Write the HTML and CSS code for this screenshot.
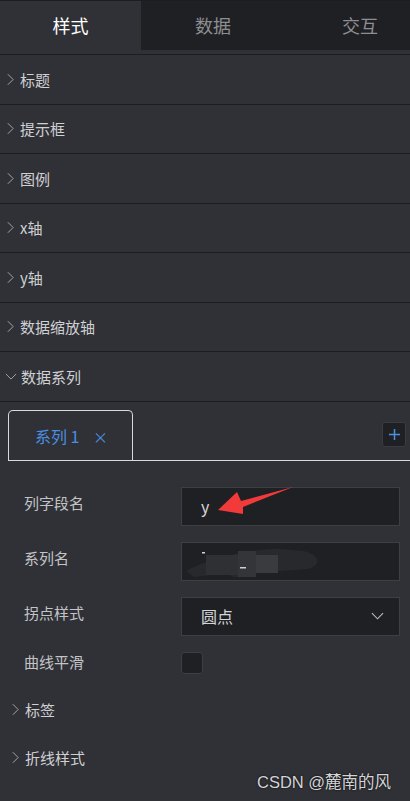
FILE: index.html
```html
<!DOCTYPE html>
<html lang="zh-CN">
<head>
  <meta charset="UTF-8">
  <title>图表配置</title>
  <link rel="stylesheet" href="styles.css">
</head>
<body>
  <div class="panel">
    <!-- 顶部标签 -->
    <div class="tabs">
      <div class="tab active">样式</div>
      <div class="tab">数据</div>
      <div class="tab">交互</div>
    </div>

    <!-- 折叠面板 -->
    <div class="collapse">
      <div class="item"><svg class="arrow" viewBox="0 0 8 14"><polyline points="1,1 7,7 1,13"/></svg>标题</div>
      <div class="item"><svg class="arrow" viewBox="0 0 8 14"><polyline points="1,1 7,7 1,13"/></svg>提示框</div>
      <div class="item"><svg class="arrow" viewBox="0 0 8 14"><polyline points="1,1 7,7 1,13"/></svg>图例</div>
      <div class="item"><svg class="arrow" viewBox="0 0 8 14"><polyline points="1,1 7,7 1,13"/></svg>x轴</div>
      <div class="item"><svg class="arrow" viewBox="0 0 8 14"><polyline points="1,1 7,7 1,13"/></svg>y轴</div>
      <div class="item"><svg class="arrow" viewBox="0 0 8 14"><polyline points="1,1 7,7 1,13"/></svg>数据缩放轴</div>
      <div class="item open"><svg class="arrow down" viewBox="0 0 14 8"><polyline points="1,1 7,7 13,1"/></svg>数据系列</div>
    </div>

    <div class="series">
      <div class="series-tabs">
        <div class="series-tab">系列 1 <span class="close">×</span></div>
        <button class="add">
          <svg viewBox="0 0 14 14"><path d="M7 1v12M1 7h12"/></svg>
        </button>
      </div>

      <div class="form">
        <div class="row">
          <label>列字段名</label>
          <div class="input">y</div>
        </div>
        <div class="row">
          <label>系列名</label>
          <div class="input masked">
            <svg class="smudge" viewBox="0 0 140 36">
              <path d="M2 28 C 20 18, 60 6, 95 6 L 120 8 C 136 12, 138 22, 124 26 L 70 30 C 60 36, 48 36, 44 30 L 10 34 Z" fill="#28292c"/>
              <rect x="22" y="12" width="32" height="20" fill="#2f3033"/>
              <rect x="54" y="8" width="18" height="26" fill="#343538"/>
              <rect x="72" y="12" width="22" height="18" fill="#3a3b3e"/>
              <rect x="18" y="9" width="3" height="1.5" fill="#d0d0d0"/>
              <rect x="56" y="24" width="6" height="1.5" fill="#d0d0d0"/>
            </svg>
          </div>
        </div>
        <div class="row">
          <label>拐点样式</label>
          <div class="input select">圆点
            <svg class="caret" viewBox="0 0 14 8"><polyline points="1,1 7,7 13,1"/></svg>
          </div>
        </div>
        <div class="row check-row">
          <label>曲线平滑</label>
          <div class="checkbox"></div>
        </div>
      </div>

      <div class="sub">
        <div class="sub-item"><svg class="arrow" viewBox="0 0 8 14"><polyline points="1,1 7,7 1,13"/></svg>标签</div>
        <div class="sub-item"><svg class="arrow" viewBox="0 0 8 14"><polyline points="1,1 7,7 1,13"/></svg>折线样式</div>
      </div>
    </div>

    <!-- 截图标注 -->
    <svg class="mark" viewBox="0 0 410 801">
      <polygon points="293,487 241,501 237,492 218,510 243,514 243,507" fill="#f23a3a"/>
    </svg>
    <div class="watermark">CSDN @麓南的风</div>
  </div>
</body>
</html>
```

FILE: styles.css
```css
body {
  margin: 0;
  background: #303136;
  font-family: "Noto Sans CJK SC", "Noto Sans", sans-serif;
  overflow: hidden;
}
.panel {
  position: relative;
  width: 410px;
  height: 801px;
  overflow: hidden;
  background: #303136;
  color: #cfd0d3;
}
.tabs {
  display: flex;
  height: 53px;
  border-top: 1px solid #1c1d20;
  border-bottom: 1px solid #1c1d20;
}
.tab {
  flex: 0 0 144px;
  height: 49px;
  line-height: 49px;
  text-align: center;
  font-size: 18px;
  color: #8d8e92;
  background: #1f2023;
}
.tab.active {
  flex-basis: 141px;
  color: #ffffff;
  background: #303136;
}
.tab:last-child {
  flex-basis: 150px;
}
.item {
  display: flex;
  align-items: center;
  height: 48.5px;
  border-bottom: 1px solid #1c1d20;
  font-size: 15px;
  padding-left: 7px;
}
.arrow {
  width: 7px;
  height: 13px;
  margin-right: 6px;
  fill: none;
  stroke: #a9aaad;
  stroke-width: 1.1;
}
.arrow.down {
  width: 12px;
  height: 7px;
  margin-left: -2px;
  margin-right: 4px;
}
.series {
  padding-top: 8px;
}
.series-tabs {
  display: flex;
  align-items: center;
  margin-left: 8px;
  height: 50px;
  border-bottom: 1.5px solid #d8d9dc;
}
.series-tab {
  align-self: stretch;
  width: 125px;
  box-sizing: border-box;
  border: 1px solid #d8d9dc;
  border-bottom: none;
  border-radius: 5px 5px 0 0;
  padding-left: 26px;
  line-height: 50px;
  font-size: 16px;
  color: #4a8fe0;
}
.close {
  margin-left: 10px;
  font-size: 15px;
}
.add {
  margin-left: auto;
  margin-right: 4px;
  width: 24px;
  height: 25px;
  padding: 0;
  background: #1f2023;
  border: 1px solid #3a3b40;
  border-radius: 3px;
}
.add svg {
  display: block;
  width: 13px;
  height: 13px;
  margin: 0 auto;
  stroke: #4a8fe0;
  stroke-width: 1.6;
}
.form {
  padding: 26px 10px 0 24px;
}
.row {
  display: flex;
  align-items: center;
  height: 39px;
  margin-bottom: 16px;
}
.row label {
  width: 157px;
  padding-bottom: 8px;
  font-size: 15px;
  color: #c3c4c7;
}
.input {
  position: relative;
  flex: 1;
  height: 39px;
  box-sizing: border-box;
  display: flex;
  align-items: center;
  padding-left: 19px;
  background: #1f2023;
  border: 1px solid #3e3f43;
  font-size: 16px;
  color: #d4d5d8;
}
.smudge {
  width: 140px;
  height: 36px;
  margin-left: -17px;
}
.select .caret {
  margin-left: auto;
  margin-right: 15px;
  width: 13px;
  height: 8px;
  fill: none;
  stroke: #bbbcbf;
  stroke-width: 1.2;
}
.check-row {
  height: 22px;
  margin-top: 3px;
}
.check-row label {
  padding-bottom: 3px;
}
.checkbox {
  width: 22px;
  height: 22px;
  box-sizing: border-box;
  background: #1f2023;
  border: 1px solid #3e3f43;
  border-radius: 3px;
}
.sub {
  margin-top: -4px;
}
.sub-item {
  display: flex;
  align-items: center;
  height: 48px;
  padding-left: 12px;
  font-size: 15px;
}
.mark {
  position: absolute;
  left: 0;
  top: 0;
  width: 410px;
  height: 801px;
  pointer-events: none;
}
.watermark {
  position: absolute;
  left: 257px;
  top: 769px;
  font-family: "Liberation Sans", "Noto Sans CJK SC", sans-serif;
  font-size: 16.5px;
  color: #d4d5d8;
  text-shadow: 0 0 2px #000;
}
```
